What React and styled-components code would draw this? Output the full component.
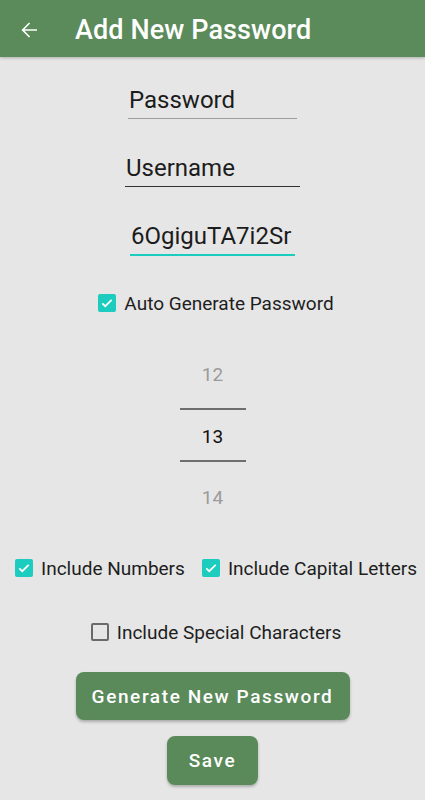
import React from "react";
import styled, { createGlobalStyle } from "styled-components";

const Global = createGlobalStyle`
  html, body { margin: 0; padding: 0; background: #e6e6e6; }
  body { font-family: Roboto, "Noto Sans", sans-serif; }
  * { box-sizing: border-box; }
`;

const Screen = styled.div`
  width: 425px;
  height: 800px;
  background: #e6e6e6;
  display: flex;
  flex-direction: column;
  align-items: center;
  overflow: hidden;
`;

const AppBar = styled.header`
  align-self: stretch;
  height: 57px;
  background: #5b8b5a;
  display: flex;
  align-items: center;
  padding: 3px 0 0 17px;
  gap: 34px;
  box-shadow: 0 1px 3px rgba(0, 0, 0, 0.25);
  flex-shrink: 0;
`;

const Title = styled.h1`
  margin: 0;
  color: #fff;
  font-size: 27px;
  font-weight: 500;
  letter-spacing: 0.1px;
`;

const Field = styled.div`
  width: ${(p) => p.$w}px;
  margin-top: ${(p) => p.$mt}px;
  padding: 0 1px 3px;
  line-height: 30px;
  font-size: 24px;
  color: #1c1c1c;
  border-bottom: ${(p) => p.$line};
  white-space: nowrap;
`;

const CheckRow = styled.div`
  display: flex;
  align-items: center;
  gap: ${(p) => p.$gap || 0}px;
  height: 24px;
  padding-left: 7px;
  margin-top: ${(p) => p.$mt}px;
`;

const CheckItem = styled.label`
  display: flex;
  align-items: center;
  gap: 8px;
  font-size: 19px;
  color: #1e1e1e;
  white-space: nowrap;
`;

const Box = styled.span`
  width: 18px;
  height: 18px;
  border-radius: 2px;
  display: flex;
  align-items: center;
  justify-content: center;
  background: ${(p) => (p.$on ? "#1ccdbf" : "transparent")};
  border: ${(p) => (p.$on ? "none" : "2px solid #6a6a6a")};
  flex-shrink: 0;
`;

const Picker = styled.div`
  display: flex;
  flex-direction: column;
  align-items: center;
  width: 66px;
`;

const PickNum = styled.div`
  line-height: 24px;
  font-size: 19px;
  margin-top: ${(p) => p.$mt}px;
  color: ${(p) => (p.$active ? "#111" : "#9a9a9a")};
`;

const PickLine = styled.div`
  width: 66px;
  height: 2px;
  background: #6e6e6e;
  margin-top: ${(p) => p.$mt}px;
`;

const Button = styled.button`
  width: ${(p) => p.$w}px;
  height: ${(p) => p.$h}px;
  margin-top: ${(p) => p.$mt}px;
  border: none;
  border-radius: 8px;
  background: #5a8a5a;
  color: #fff;
  font-family: Roboto, "Noto Sans", sans-serif;
  font-size: 19px;
  font-weight: 500;
  letter-spacing: 1.6px;
  box-shadow: 0 2px 3px rgba(0, 0, 0, 0.25);
  padding: 0;
`;

const Check = () => (
  <svg width="14" height="14" viewBox="0 0 24 24">
    <path d="M4 12.5l5 5L20 6.5" fill="none" stroke="#fff" strokeWidth="3" />
  </svg>
);

const CheckBox = ({ on, children }) => (
  <CheckItem>
    <Box $on={on}>{on && <Check />}</Box>
    {children}
  </CheckItem>
);

export default function App() {
  return (
    <>
      <Global />
      <Screen>
        <AppBar>
          <svg width="24" height="24" viewBox="0 0 24 24">
            <path
              fill="#fff"
              d="M20 11.2H7.5l5.6-5.6L12 4.5 4.5 12l7.5 7.5 1.1-1.1-5.6-5.6H20z"
            />
          </svg>
          <Title>Add New Password</Title>
        </AppBar>

        <Field $w={169} $mt={28} $line="1.5px solid #9c9c9c">Password</Field>
        <Field $w={175} $mt={34} $line="1px solid #333">Username</Field>
        <Field $w={165} $mt={34} $line="2px solid #1ccdbf">6OgiguTA7i2Sr</Field>

        <CheckRow $mt={35}>
          <CheckBox on>Auto Generate Password</CheckBox>
        </CheckRow>

        <Picker>
          <PickNum $mt={48}>12</PickNum>
          <PickLine $mt={21} />
          <PickNum $mt={15} $active>13</PickNum>
          <PickLine $mt={11} />
          <PickNum $mt={24}>14</PickNum>
        </Picker>

        <CheckRow $mt={46} $gap={17}>
          <CheckBox on>Include Numbers</CheckBox>
          <CheckBox on>Include Capital Letters</CheckBox>
        </CheckRow>

        <CheckRow $mt={40}>
          <CheckBox>Include Special Characters</CheckBox>
        </CheckRow>

        <Button $w={274} $h={48} $mt={28}>Generate New Password</Button>
        <Button $w={91} $h={49} $mt={16}>Save</Button>
      </Screen>
    </>
  );
}
